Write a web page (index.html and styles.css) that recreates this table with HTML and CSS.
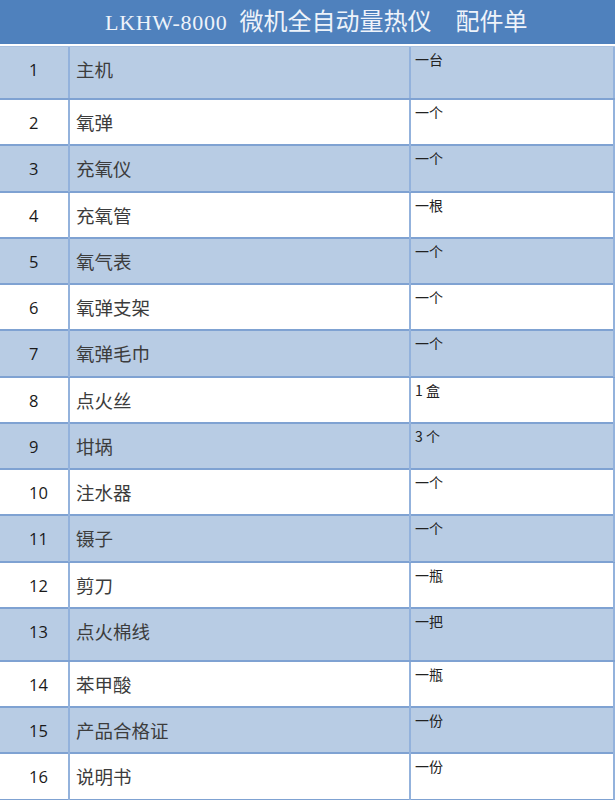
FILE: index.html
```html
<!DOCTYPE html>
<html lang="zh">
<head>
<meta charset="utf-8">
<title>配件单</title>
<link rel="stylesheet" href="styles.css">
</head>
<body>
<div class="sheet">
  <div class="title"><span class="model">LKHW-8000</span>微机全自动量热仪<span class="gap"></span>配件单</div>
  <div class="table">
    <div class="row shade tall"><div class="no">1</div><div class="name">主机</div><div class="qty">一台</div></div>
    <div class="row"><div class="no">2</div><div class="name">氧弹</div><div class="qty">一个</div></div>
    <div class="row shade"><div class="no">3</div><div class="name">充氧仪</div><div class="qty">一个</div></div>
    <div class="row"><div class="no">4</div><div class="name">充氧管</div><div class="qty">一根</div></div>
    <div class="row shade"><div class="no">5</div><div class="name">氧气表</div><div class="qty">一个</div></div>
    <div class="row"><div class="no">6</div><div class="name">氧弹支架</div><div class="qty">一个</div></div>
    <div class="row shade"><div class="no">7</div><div class="name">氧弹毛巾</div><div class="qty">一个</div></div>
    <div class="row"><div class="no">8</div><div class="name">点火丝</div><div class="qty">1 盒</div></div>
    <div class="row shade"><div class="no">9</div><div class="name">坩埚</div><div class="qty">3 个</div></div>
    <div class="row"><div class="no">10</div><div class="name">注水器</div><div class="qty">一个</div></div>
    <div class="row shade"><div class="no">11</div><div class="name">镊子</div><div class="qty">一个</div></div>
    <div class="row"><div class="no">12</div><div class="name">剪刀</div><div class="qty">一瓶</div></div>
    <div class="row shade tall"><div class="no">13</div><div class="name">点火棉线</div><div class="qty">一把</div></div>
    <div class="row"><div class="no">14</div><div class="name">苯甲酸</div><div class="qty">一瓶</div></div>
    <div class="row shade"><div class="no">15</div><div class="name">产品合格证</div><div class="qty">一份</div></div>
    <div class="row"><div class="no">16</div><div class="name">说明书</div><div class="qty">一份</div></div>
  </div>
</div>
</body>
</html>
```

FILE: styles.css
```css
* { box-sizing: border-box; }

html, body {
  margin: 0;
  padding: 0;
  background: #ffffff;
}

.sheet {
  width: 615px;
}

.title {
  height: 44px;
  line-height: 44px;
  background: #4f81bd;
  color: #eef3fa;
  font-family: "Liberation Serif", "Noto Sans CJK SC", serif;
  font-size: 24px;
  padding-left: 105px;
  white-space: nowrap;
  margin-bottom: 2px;
}

.title .model {
  font-size: 22px;
  letter-spacing: 0.7px;
  margin-right: 12px;
}

.title .gap {
  display: inline-block;
  width: 24px;
}

.table {
  border-top: 1px solid #a9c1e0;
}

.row {
  display: grid;
  grid-template-columns: 70px 341px 204px;
  height: 46.27px;
  border-bottom: 2px solid #7fa2d2;
  background: #ffffff;
}

.row.tall {
  height: 53px;
}

.row.shade {
  background: #b8cce4;
}

.row > div {
  border-right: 2px solid #93b2dc;
}

.no {
  font-family: "Open Sans", "Noto Sans", sans-serif;
  font-size: 16.5px;
  font-weight: 500;
  color: #1a1a1a;
  line-height: 46px;
  padding-left: 29px;
}

.name {
  font-family: "Noto Sans CJK SC", sans-serif;
  font-size: 18.5px;
  color: #3c3c3c;
  line-height: 45px;
  padding-left: 6px;
}

.qty {
  font-family: "Noto Sans CJK SC", sans-serif;
  font-size: 14px;
  color: #222222;
  line-height: 16px;
  padding-top: 4px;
  padding-left: 4px;
}
```
